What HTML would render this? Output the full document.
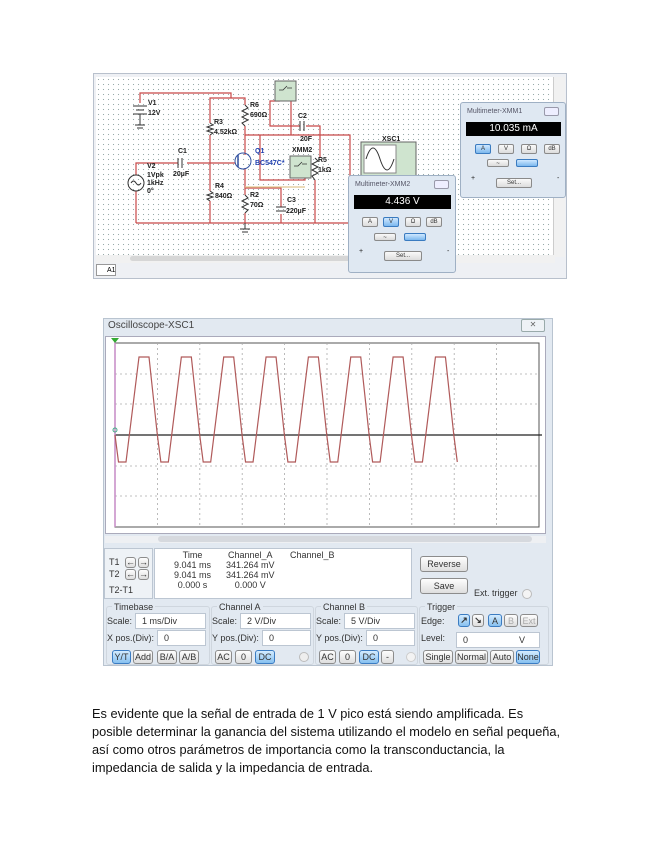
<!DOCTYPE html>
<html><head><meta charset="utf-8"><style>
*{margin:0;padding:0;box-sizing:border-box}
body{width:655px;height:848px;background:#fff;position:relative;overflow:hidden;font-family:"Liberation Sans",Arial,sans-serif}
.a{position:absolute}
.t{position:absolute;font-size:7px;font-weight:bold;color:#222;white-space:nowrap;line-height:8px}
.mm{position:absolute;background:#dfe8f2;border:1px solid #9fb0c4;border-radius:3px}
.mm .ti{position:absolute;left:6px;top:5px;font-size:7px;color:#556}
.mm .cl{position:absolute;right:6px;top:4px;width:15px;height:9px;border:1px solid #99a;border-radius:2px;background:#eef}
.mm .dsp{position:absolute;background:#000;color:#fff;font-size:10px;text-align:center;line-height:13px}
.b{position:absolute;background:linear-gradient(#fafafa,#dcdcdc);border:1px solid #8a8a8a;border-radius:2px;font-size:6px;text-align:center;color:#333;line-height:8px}
.bb{background:linear-gradient(#cfe8ff,#7cb8ee);border-color:#3a7bc0}
.os{font-size:9px;color:#333;white-space:nowrap}
.in{position:absolute;background:#fff;border:1px solid #bcc6d2;font-size:9px;padding-left:6px;line-height:14px;color:#333}
.ob{position:absolute;background:linear-gradient(#fdfdfd,#dedede);border:1px solid #8c8c8c;border-radius:3px;font-size:9px;text-align:center;line-height:13px;color:#333}
.obb{background:linear-gradient(#d4ecff,#86c0f0);border-color:#3b7cc2}
.ar{font-weight:bold;font-size:9px;line-height:9px}
p{position:absolute;left:92px;top:705px;font-size:12.8px;line-height:18px;color:#111;white-space:nowrap}
</style></head><body>

<div class="a" style="left:93px;top:73px;width:474px;height:206px;background:#eef0f4;border:1px solid #b8c0cc"></div>
<div class="a" style="left:96px;top:77px;width:459px;height:180px;background-color:#fff;background-image:radial-gradient(#9aa 0.6px,transparent 0.8px);background-size:5px 5px"></div>
<div class="a" style="left:553px;top:77px;width:12px;height:180px;background:#f1f1f1;border-left:1px solid #ccc"></div>
<div class="a" style="left:96px;top:255px;width:459px;height:8px;background:#f1f1f1"></div>
<div class="a" style="left:130px;top:256px;width:310px;height:5px;background:#d6d6d6;border-radius:3px"></div>
<div class="a" style="left:96px;top:264px;width:20px;height:12px;border:1px solid #999;background:#fff;font-size:7px;padding-left:10px;line-height:11px">A1</div>

<svg class="a" style="left:0;top:0" width="655" height="300">
<g stroke="#c84848" stroke-width="1.2" fill="none">
<polyline points="140,103 140,93 231,93 231,98"/>
<polyline points="210,123 210,98 245,98 245,105"/>
<line x1="210" y1="135" x2="210" y2="191"/>
<line x1="210" y1="201" x2="210" y2="223"/>
<polyline points="136,175 136,163 178,163"/>
<line x1="187" y1="163" x2="235" y2="163"/>
<line x1="136" y1="191" x2="136" y2="223"/>
<line x1="136" y1="223" x2="350" y2="223"/>
<polyline points="245,126 245,135 350,135 350,190"/>
<polyline points="245,135 245,155"/>
<polyline points="245,168 245,195"/>
<line x1="245" y1="213" x2="245" y2="223"/>
<polyline points="245,188 281,188 281,207"/>
<line x1="281" y1="214" x2="281" y2="223"/>
<polyline points="260,135 260,180 305,180 305,178"/>
<polyline points="300,126 270,126 270,101 280,101"/>
<polyline points="306,126 320,126 320,158"/>
<line x1="315" y1="180" x2="315" y2="223"/>
<polyline points="291,101 291,135"/>
</g>
<line x1="245" y1="187" x2="305" y2="187" stroke="#e0c890" stroke-width="1.2"/>
<g stroke="#333" stroke-width="1" fill="none">
<line x1="133" y1="106" x2="147" y2="106"/><line x1="136" y1="110" x2="144" y2="110"/><line x1="133" y1="114" x2="147" y2="114"/><line x1="140" y1="114" x2="140" y2="125"/><line x1="135" y1="125" x2="145" y2="125"/><line x1="137" y1="128" x2="143" y2="128"/>
<polyline points="210,123 213,125 207,127 213,129 207,131 213,133 210,135"/>
<polyline points="210,191 213,193 207,195 213,197 207,199 210,201"/>
<polyline points="245,105 248,108 242,111 248,114 242,117 248,120 242,123 245,126"/>
<polyline points="245,195 248,198 242,201 248,204 242,207 248,210 245,213"/>
<polyline points="315,158 318,161 312,164 318,167 312,170 318,173 312,176 315,180"/>
<line x1="178" y1="158" x2="178" y2="168"/><line x1="182" y1="158" x2="182" y2="168"/>
<line x1="300" y1="121" x2="300" y2="131"/><line x1="304" y1="121" x2="304" y2="131"/>
<line x1="276" y1="207" x2="286" y2="207"/><line x1="276" y1="211" x2="286" y2="211"/>
<circle cx="136" cy="183" r="8"/><path d="M131 183 q2.5 -4 5 0 t5 0"/>
<line x1="245" y1="223" x2="245" y2="229"/><line x1="240" y1="229" x2="250" y2="229"/><line x1="242" y1="232" x2="248" y2="232"/>
</g>
<circle cx="243" cy="161" r="8" fill="none" stroke="#3050a0"/>
<line x1="238" y1="155" x2="238" y2="167" stroke="#3050a0" stroke-width="1.5"/>
<rect x="275" y="81" width="21" height="20" fill="#cfe4cf" stroke="#666"/><path d="M279 90 h4 l4 -4 M287 88 h5" stroke="#333" fill="none" stroke-width=".8"/>
<rect x="290" y="156" width="21" height="22" fill="#cfe4cf" stroke="#666"/><path d="M294 166 h4 l4 -4 M302 164 h5" stroke="#333" fill="none" stroke-width=".8"/>
<rect x="361" y="142" width="55" height="40" fill="#cfe4cf" stroke="#666"/>
<rect x="364" y="145" width="32" height="28" fill="#fff" stroke="#888"/>
<path d="M366 159 q7 -22 14 0 t14 0" stroke="#333" fill="none"/>
</svg>
<div class="t" style="left:148px;top:100px">V1</div><div class="t" style="left:148px;top:110px">12V</div>
<div class="t" style="left:250px;top:102px">R6</div><div class="t" style="left:250px;top:112px">690Ω</div>
<div class="t" style="left:214px;top:119px">R3</div><div class="t" style="left:214px;top:129px">4.52kΩ</div>
<div class="t" style="left:298px;top:113px">C2</div><div class="t" style="left:300px;top:136px">20F</div>
<div class="t" style="left:382px;top:136px">XSC1</div>
<div class="t" style="left:178px;top:148px">C1</div><div class="t" style="left:173px;top:171px">20µF</div>
<div class="t" style="left:255px;top:148px;color:#2040b0">Q1</div><div class="t" style="left:255px;top:160px;color:#2040b0">BC547C*</div>
<div class="t" style="left:292px;top:147px">XMM2</div>
<div class="t" style="left:318px;top:157px">R5</div><div class="t" style="left:318px;top:167px">1kΩ</div>
<div class="t" style="left:147px;top:163px">V2</div><div class="t" style="left:147px;top:172px">1Vpk</div><div class="t" style="left:147px;top:180px">1kHz</div><div class="t" style="left:147px;top:188px">0°</div>
<div class="t" style="left:215px;top:183px">R4</div><div class="t" style="left:215px;top:193px">840Ω</div>
<div class="t" style="left:250px;top:192px">R2</div><div class="t" style="left:250px;top:202px">70Ω</div>
<div class="t" style="left:287px;top:197px">C3</div><div class="t" style="left:286px;top:208px">220µF</div>

<div class="mm" style="left:460px;top:102px;width:106px;height:96px">
<div class="ti">Multimeter-XMM1</div><div class="cl"></div>
<div class="dsp" style="left:5px;top:19px;width:95px;height:14px">10.035 mA</div>
<div class="b bb" style="left:14px;top:41px;width:16px;height:10px">A</div><div class="b" style="left:37px;top:41px;width:16px;height:10px">V</div><div class="b" style="left:60px;top:41px;width:16px;height:10px">Ω</div><div class="b" style="left:83px;top:41px;width:16px;height:10px">dB</div>
<div class="b" style="left:26px;top:56px;width:22px;height:8px">~</div><div class="b bb" style="left:55px;top:56px;width:22px;height:8px"></div>
<div class="b" style="left:35px;top:75px;width:36px;height:10px">Set...</div>
<div class="t" style="left:10px;top:72px;font-weight:normal">+</div><div class="t" style="left:96px;top:72px;font-weight:normal">-</div>
</div>
<div class="mm" style="left:348px;top:175px;width:108px;height:98px">
<div class="ti">Multimeter-XMM2</div><div class="cl"></div>
<div class="dsp" style="left:5px;top:19px;width:97px;height:14px">4.436 V</div>
<div class="b" style="left:13px;top:41px;width:16px;height:10px">A</div><div class="b bb" style="left:34px;top:41px;width:16px;height:10px">V</div><div class="b" style="left:56px;top:41px;width:16px;height:10px">Ω</div><div class="b" style="left:77px;top:41px;width:16px;height:10px">dB</div>
<div class="b" style="left:25px;top:57px;width:22px;height:8px">~</div><div class="b bb" style="left:55px;top:57px;width:22px;height:8px"></div>
<div class="b" style="left:35px;top:75px;width:38px;height:10px">Set...</div>
<div class="t" style="left:10px;top:72px;font-weight:normal">+</div><div class="t" style="left:98px;top:72px;font-weight:normal">-</div>
</div>

<div class="a" style="left:103px;top:318px;width:450px;height:348px;background:#e2e9f1;border:1px solid #b9c4d0"></div>
<div class="a os" style="left:108px;top:320px;font-size:10px;color:#444">Oscilloscope-XSC1</div>
<div class="a" style="left:521px;top:319px;width:24px;height:13px;border:1px solid #9aa;border-radius:2px;background:#eef2f6;font-size:8px;text-align:center;color:#666">✕</div>
<div class="a" style="left:105px;top:336px;width:441px;height:198px;background:#fff;border:1px solid #aab"></div>
<svg class="a" style="left:0;top:0" width="655" height="540">
<rect x="115" y="343" width="424" height="184" fill="#fff" stroke="#555" stroke-width="1"/>
<g stroke="#aaa" stroke-dasharray="2,3" stroke-width=".8">
<line x1="157.4" y1="343" x2="157.4" y2="527"/><line x1="199.8" y1="343" x2="199.8" y2="527"/><line x1="242.2" y1="343" x2="242.2" y2="527"/><line x1="284.6" y1="343" x2="284.6" y2="527"/><line x1="327" y1="343" x2="327" y2="527"/><line x1="369.4" y1="343" x2="369.4" y2="527"/><line x1="411.8" y1="343" x2="411.8" y2="527"/><line x1="454.2" y1="343" x2="454.2" y2="527"/><line x1="496.6" y1="343" x2="496.6" y2="527"/>
<line x1="115" y1="374" x2="539" y2="374"/><line x1="115" y1="404" x2="539" y2="404"/><line x1="115" y1="466" x2="539" y2="466"/><line x1="115" y1="496" x2="539" y2="496"/>
</g>
<line x1="115" y1="435" x2="542" y2="435" stroke="#222" stroke-width="1.2"/>
<line x1="115" y1="338" x2="115" y2="527" stroke="#c58ac5" stroke-width="1.5"/>
<path d="M111 338 h8 l-4 5z" fill="#3a3"/><circle cx="115" cy="430" r="2" fill="none" stroke="#4a8"/>
<polyline fill="none" stroke="#b05a5a" stroke-width="1.2" points="115,435 118.5,462 126,462 139,357 149,357 157.35,435 160.85,462 168.35,462 181.35,357 191.35,357 199.7,435 203.2,462 210.7,462 223.7,357 233.7,357 242.05,435 245.55,462 253.05,462 266.05,357 276.05,357 284.4,435 287.9,462 295.4,462 308.4,357 318.4,357 326.75,435 330.25,462 337.75,462 350.75,357 360.75,357 369.1,435 372.6,462 380.1,462 393.1,357 403.1,357 411.45,435 414.95,462 422.45,462 435.45,357 445.45,357 453.8,435 457.3,462"/>
</svg>
<div class="a" style="left:105px;top:536px;width:441px;height:7px;background:#eef0f3"></div>
<div class="a" style="left:158px;top:536px;width:374px;height:6px;background:#d6d9de;border-radius:3px"></div>

<div class="a" style="left:104px;top:548px;width:49px;height:51px;border:1px solid #bcc6d2;background:#eef2f6"></div>
<div class="a os" style="left:109px;top:557px">T1</div><div class="a os" style="left:109px;top:569px">T2</div><div class="a os" style="left:109px;top:585px">T2-T1</div>
<div class="ob ar" style="left:125px;top:557px;width:11px;height:11px">←</div><div class="ob ar" style="left:138px;top:557px;width:11px;height:11px">→</div>
<div class="ob ar" style="left:125px;top:569px;width:11px;height:11px">←</div><div class="ob ar" style="left:138px;top:569px;width:11px;height:11px">→</div>
<div class="a" style="left:154px;top:548px;width:258px;height:51px;background:#fff;border:1px solid #bcc6d2"></div>
<div class="a os" style="left:174px;top:550px;line-height:10px;text-align:center">Time<br>9.041 ms<br>9.041 ms<br>0.000 s</div>
<div class="a os" style="left:226px;top:550px;line-height:10px;text-align:center">Channel_A<br>341.264 mV<br>341.264 mV<br>0.000 V</div>
<div class="a os" style="left:290px;top:550px">Channel_B</div>
<div class="ob" style="left:420px;top:556px;width:48px;height:16px;line-height:14px">Reverse</div>
<div class="ob" style="left:420px;top:578px;width:48px;height:16px;line-height:14px">Save</div>
<div class="a os" style="left:474px;top:588px">Ext. trigger</div>
<div class="a" style="left:522px;top:589px;width:10px;height:10px;border-radius:50%;border:1px solid #bbb;background:#f4f4f4"></div>

<div class="a" style="left:106px;top:606px;width:104px;height:59px;border:1px solid #cfd6de;border-radius:3px"></div>
<div class="a" style="left:211px;top:606px;width:103px;height:59px;border:1px solid #cfd6de;border-radius:3px"></div>
<div class="a" style="left:315px;top:606px;width:103px;height:59px;border:1px solid #cfd6de;border-radius:3px"></div>
<div class="a" style="left:419px;top:606px;width:130px;height:59px;border:1px solid #cfd6de;border-radius:3px"></div>
<div class="a os" style="left:112px;top:602px;background:#e2e9f1;padding:0 2px">Timebase</div>
<div class="a os" style="left:217px;top:602px;background:#e2e9f1;padding:0 2px">Channel A</div>
<div class="a os" style="left:321px;top:602px;background:#e2e9f1;padding:0 2px">Channel B</div>
<div class="a os" style="left:425px;top:602px;background:#e2e9f1;padding:0 2px">Trigger</div>

<div class="a os" style="left:107px;top:616px">Scale:</div><div class="in" style="left:135px;top:613px;width:71px;height:16px">1 ms/Div</div>
<div class="a os" style="left:107px;top:633px">X pos.(Div):</div><div class="in" style="left:157px;top:630px;width:49px;height:16px">0</div>
<div class="a os" style="left:212px;top:616px">Scale:</div><div class="in" style="left:240px;top:613px;width:71px;height:16px">2 V/Div</div>
<div class="a os" style="left:212px;top:633px">Y pos.(Div):</div><div class="in" style="left:262px;top:630px;width:49px;height:16px">0</div>
<div class="a os" style="left:316px;top:616px">Scale:</div><div class="in" style="left:344px;top:613px;width:71px;height:16px">5 V/Div</div>
<div class="a os" style="left:316px;top:633px">Y pos.(Div):</div><div class="in" style="left:366px;top:630px;width:49px;height:16px">0</div>
<div class="a os" style="left:421px;top:616px">Edge:</div>
<div class="ob obb ar" style="left:458px;top:614px;width:12px;height:13px;line-height:11px">↗</div><div class="ob ar" style="left:472px;top:614px;width:12px;height:13px;line-height:11px">↘</div>
<div class="ob obb" style="left:488px;top:614px;width:14px;height:13px">A</div><div class="ob" style="left:504px;top:614px;width:14px;height:13px;color:#aaa">B</div><div class="ob" style="left:520px;top:614px;width:18px;height:13px;color:#aaa">Ext</div>
<div class="a os" style="left:421px;top:633px">Level:</div><div class="in" style="left:456px;top:632px;width:84px;height:16px">0<span style="position:absolute;left:62px">V</span></div>

<div class="ob obb" style="left:112px;top:650px;width:19px;height:14px">Y/T</div><div class="ob" style="left:133px;top:650px;width:20px;height:14px">Add</div><div class="ob" style="left:157px;top:650px;width:20px;height:14px">B/A</div><div class="ob" style="left:179px;top:650px;width:20px;height:14px">A/B</div>
<div class="ob" style="left:215px;top:650px;width:17px;height:14px">AC</div><div class="ob" style="left:235px;top:650px;width:17px;height:14px">0</div><div class="ob obb" style="left:255px;top:650px;width:20px;height:14px">DC</div>
<div class="a" style="left:299px;top:652px;width:10px;height:10px;border-radius:50%;border:1px solid #bbb;background:#eee"></div>
<div class="ob" style="left:319px;top:650px;width:17px;height:14px">AC</div><div class="ob" style="left:339px;top:650px;width:17px;height:14px">0</div><div class="ob obb" style="left:359px;top:650px;width:20px;height:14px">DC</div><div class="ob" style="left:381px;top:650px;width:13px;height:14px">-</div>
<div class="a" style="left:406px;top:652px;width:10px;height:10px;border-radius:50%;border:1px solid #ccc;background:#f3f3f3"></div>
<div class="ob" style="left:423px;top:650px;width:30px;height:14px">Single</div><div class="ob" style="left:455px;top:650px;width:33px;height:14px">Normal</div><div class="ob" style="left:490px;top:650px;width:24px;height:14px">Auto</div><div class="ob obb" style="left:516px;top:650px;width:24px;height:14px">None</div>

<p>Es evidente que la señal de entrada de 1 V pico está siendo amplificada. Es<br>posible determinar la ganancia del sistema utilizando el modelo en señal pequeña,<br>así como otros parámetros de importancia como la transconductancia, la<br>impedancia de salida y la impedancia de entrada.</p>
</body></html>
